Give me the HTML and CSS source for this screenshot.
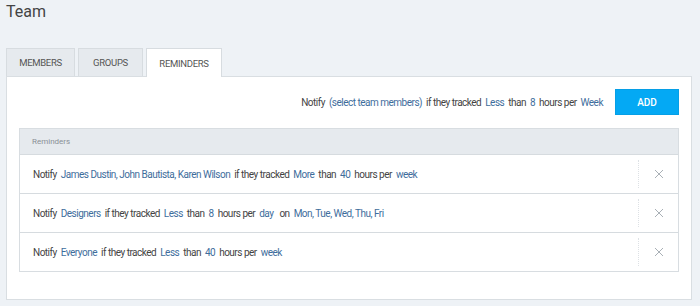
FILE: index.html
```html
<!DOCTYPE html>
<html>
<head>
<meta charset="utf-8">
<link rel="stylesheet" href="styles.css">
</head>
<body>
<h1 class="title">Team</h1>
<div class="tabs">
  <div class="tab">MEMBERS</div>
  <div class="tab">GROUPS</div>
  <div class="tab active">REMINDERS</div>
</div>
<div class="panel">
  <div class="toolbar">
    <div class="sentence">Notify <a class="link">(select team members)</a> if they tracked <a class="link">Less</a> than <a class="link">8</a> hours per <a class="link">Week</a></div>
    <button class="add">ADD</button>
  </div>
  <div class="table">
    <div class="thead">Reminders</div>
    <div class="row">
      <div class="sentence">Notify <a class="link">James Dustin, John Bautista, Karen Wilson</a> if they tracked <a class="link">More</a> than <a class="link">40</a> hours per <a class="link">week</a></div>
      <div class="del"><svg width="10" height="10" viewBox="0 0 10 10"><path d="M1 1L9 9M9 1L1 9" stroke="#a9b0b6" stroke-width="1" fill="none"/></svg></div>
    </div>
    <div class="row">
      <div class="sentence">Notify <a class="link">Designers</a> if they tracked <a class="link">Less</a> than <a class="link">8</a> hours per <a class="link">day</a> &nbsp;on <a class="link plain">Mon, Tue, Wed, Thu, Fri</a></div>
      <div class="del"><svg width="10" height="10" viewBox="0 0 10 10"><path d="M1 1L9 9M9 1L1 9" stroke="#a9b0b6" stroke-width="1" fill="none"/></svg></div>
    </div>
    <div class="row">
      <div class="sentence">Notify <a class="link">Everyone</a> if they tracked <a class="link">Less</a> than <a class="link">40</a> hours per <a class="link">week</a></div>
      <div class="del"><svg width="10" height="10" viewBox="0 0 10 10"><path d="M1 1L9 9M9 1L1 9" stroke="#a9b0b6" stroke-width="1" fill="none"/></svg></div>
    </div>
  </div>
</div>
</body>
</html>
```
FILE: styles.css
```css
html, body {
  margin: 0;
  padding: 0;
}
body {
  background: #eef2f6;
  font-family: Roboto, "Liberation Sans", sans-serif;
  color: #444;
  padding: 0 8px 0 6px;
}
.title {
  margin: 0;
  padding-top: 2px;
  font-size: 16px;
  font-weight: 400;
  line-height: 20px;
  color: #444;
  height: 46px;
}
.tabs {
  display: flex;
  gap: 3px;
  height: 28px;
  position: relative;
  z-index: 1;
}
.tab {
  box-sizing: border-box;
  height: 28px;
  border: 1px solid #d7dce0;
  border-bottom: none;
  background: #e6eaee;
  font-size: 9.5px;
  letter-spacing: -0.3px;
  color: #555;
  display: flex;
  align-items: center;
  justify-content: center;
  padding: 0;
  width: 69px;
}
.tab:nth-child(2) { width: 65px; }
.tab.active {
  background: #fff;
  height: 29px;
  width: 76px;
}
.panel {
  box-sizing: border-box;
  width: 686px;
  background: #fff;
  border: 1px solid #d9dee2;
  box-shadow: 0 2px 0 #c6d0d8;
  padding: 12px 12px 27px 12px;
}
.toolbar {
  display: flex;
  justify-content: flex-end;
  align-items: center;
  gap: 10px;
  height: 26px;
  margin-bottom: 13px;
}
.sentence {
  font-size: 10px;
  letter-spacing: -0.5px;
  color: #444;
  white-space: nowrap;
}
.link {
  color: #3e6d9c;
  padding: 0 2px;
  text-decoration: none;
}
.add {
  width: 64px;
  height: 26px;
  border: 1px solid #069fe6;
  background: #04a9f4;
  color: #fff;
  font-family: Roboto, "Liberation Sans", sans-serif;
  font-size: 10px;
  font-weight: 500;
  padding: 0;
}
.table {
  border: 1px solid #d8dde1;
}
.thead {
  height: 25px;
  background: #e6eaee;
  border-bottom: 1px solid #d6dbdf;
  font-size: 8px;
  color: #8a9096;
  display: flex;
  align-items: center;
  padding-left: 12px;
}
.row {
  display: flex;
  align-items: center;
  height: 38px;
  border-bottom: 1px solid #d6dbdf;
  padding-left: 13px;
}
.row:last-child {
  border-bottom: none;
}
.row .sentence {
  flex: 1;
}
.del {
  width: 39px;
  height: 28px;
  border-left: 1px dotted #dde1e5;
  display: flex;
  align-items: center;
  justify-content: center;
}
.del svg { display: block; }
```
